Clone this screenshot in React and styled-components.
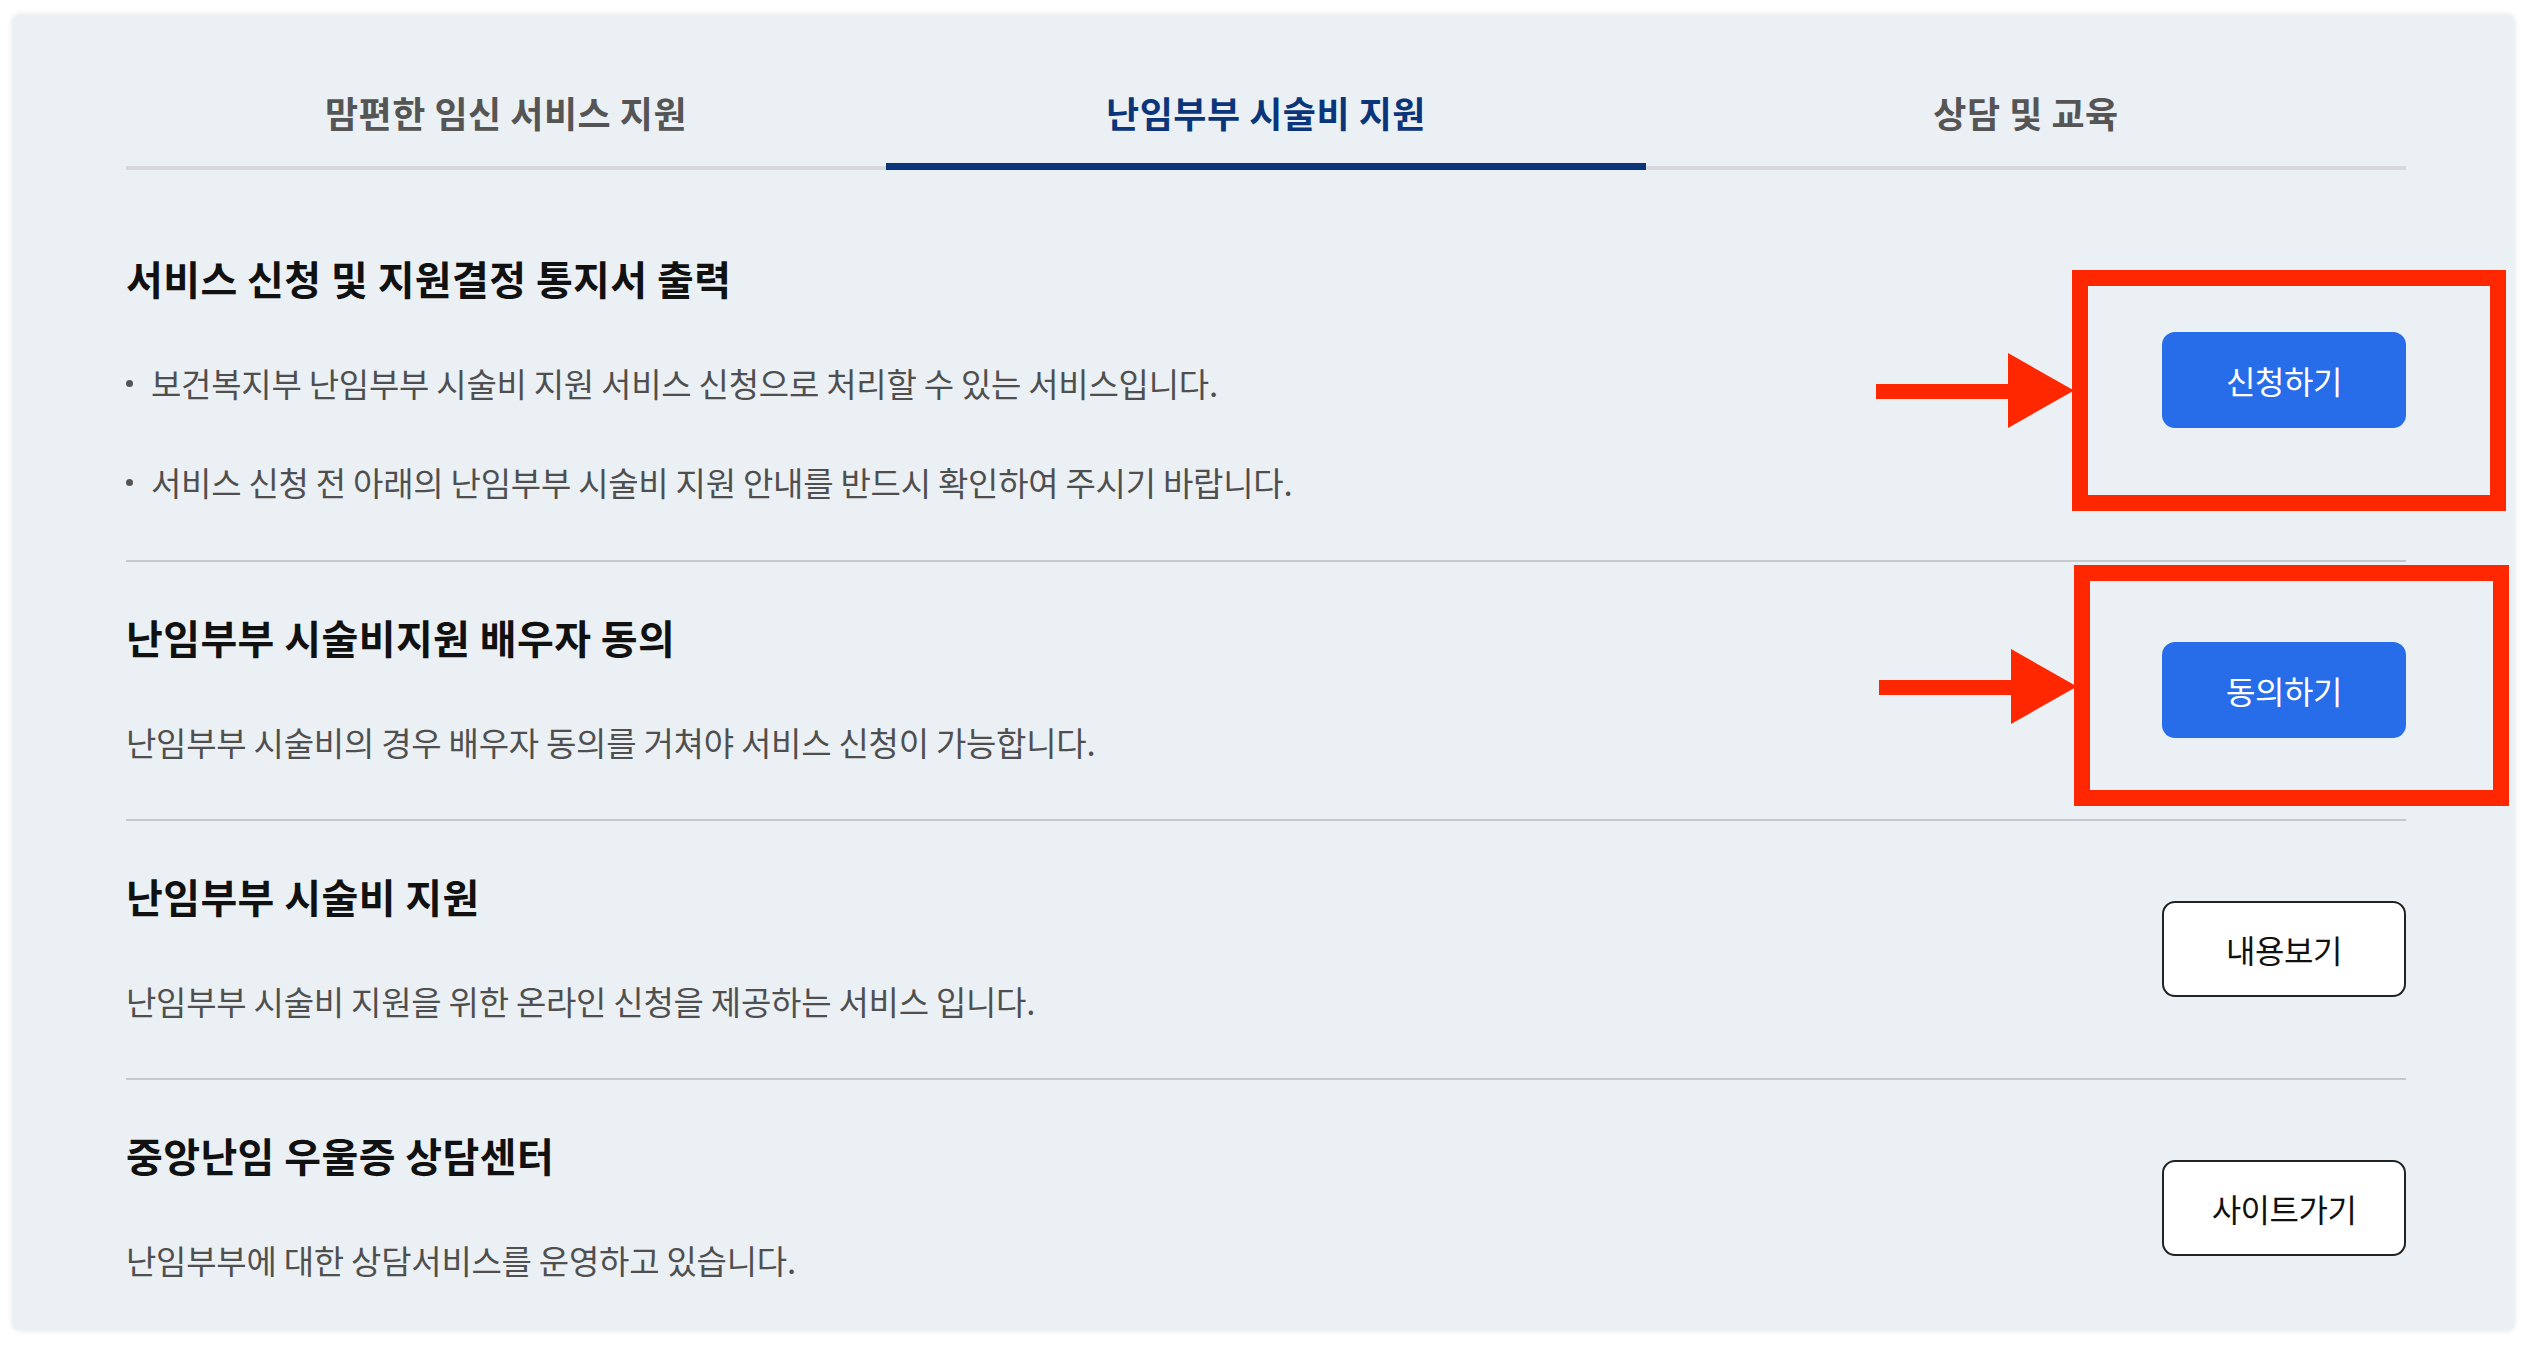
import React from "react";
import styled, { createGlobalStyle } from "styled-components";

const GlobalStyle = createGlobalStyle`
  html, body { margin: 0; padding: 0; background: #ffffff; }
  body { font-family: "Noto Sans CJK KR", "Noto Sans", sans-serif; }
  * { box-sizing: border-box; }
`;

const Page = styled.div`
  padding: 15px 14px 15px 13px;
`;

const Card = styled.div`
  background: #ebf0f4;
  border-radius: 6px;
  box-shadow: 0 0 6px rgba(0, 0, 0, 0.13);
  padding: 0 108px 0 113px;
`;

const TabBar = styled.div`
  display: grid;
  grid-template-columns: repeat(3, 1fr);
`;

const Tab = styled.div`
  height: 155px;
  padding-top: 79px;
  text-align: center;
  font-size: 36px;
  line-height: 36px;
  font-weight: 700;
  letter-spacing: 0.5px;
  color: ${(p) => (p.$active ? "#0a357a" : "#555555")};
  border-bottom: ${(p) => (p.$active ? "7px solid #0a357a" : "4px solid #d6d8db")};
`;

const Row = styled.section`
  position: relative;
  display: flex;
  align-items: center;
  justify-content: space-between;
  padding: 53px 0 55px;
  border-bottom: 2px solid #c7c8ca;
  &:first-of-type { padding-top: 86px; padding-bottom: 56px; }
  &:last-of-type { border-bottom: none; padding-bottom: 48px; }
`;

const Info = styled.div`
  display: flex;
  flex-direction: column;
  gap: 61px;
`;

const Title = styled.h3`
  margin: 0;
  font-size: 40px;
  line-height: 44px;
  font-weight: 700;
  color: #111111;
  letter-spacing: 0.4px;
`;

const Desc = styled.p`
  margin: 0;
  font-size: 33px;
  line-height: 44px;
  font-weight: 400;
  color: #4f4f4f;
  letter-spacing: -0.25px;
`;

const BulletList = styled.ul`
  margin: 0;
  padding: 0;
  list-style: none;
  display: flex;
  flex-direction: column;
  gap: 55px;
`;

const BulletItem = styled.li`
  display: flex;
  align-items: center;
  font-size: 33px;
  line-height: 44px;
  color: #4f4f4f;
  letter-spacing: -0.25px;
`;

const Dot = styled.span`
  width: 7px;
  height: 7px;
  border-radius: 50%;
  background: #555555;
  margin-right: 18px;
  flex: none;
`;

const ActionButton = styled.button`
  flex: none;
  width: 244px;
  height: 96px;
  border-radius: 13px;
  font-family: inherit;
  font-size: 32px;
  font-weight: 400;
  letter-spacing: -0.5px;
  cursor: pointer;
  background: ${(p) => (p.$primary ? "#276de9" : "#ffffff")};
  color: ${(p) => (p.$primary ? "#ffffff" : "#111111")};
  border: ${(p) => (p.$primary ? "none" : "2px solid #222222")};
`;

const Highlight = styled.div`
  position: absolute;
  border: 16px solid #ff2700;
  pointer-events: none;
`;

const ArrowMark = styled.svg`
  position: absolute;
  pointer-events: none;
`;

const Arrow = ({ style }) => (
  <ArrowMark style={style} width="198" height="75" viewBox="0 0 198 75">
    <rect x="0" y="31" width="134" height="15" fill="#ff2700" />
    <polygon points="132,0 198,37.5 132,75" fill="#ff2700" />
  </ArrowMark>
);

const tabs = ["맘편한 임신 서비스 지원", "난임부부 시술비 지원", "상담 및 교육"];

export default function App() {
  return (
    <>
      <GlobalStyle />
      <Page>
        <Card>
          <TabBar>
            {tabs.map((t, i) => (
              <Tab key={t} $active={i === 1}>
                {t}
              </Tab>
            ))}
          </TabBar>

          <Row>
            <Info>
              <Title>서비스 신청 및 지원결정 통지서 출력</Title>
              <BulletList>
                <BulletItem>
                  <Dot />
                  보건복지부 난임부부 시술비 지원 서비스 신청으로 처리할 수 있는 서비스입니다.
                </BulletItem>
                <BulletItem>
                  <Dot />
                  서비스 신청 전 아래의 난임부부 시술비 지원 안내를 반드시 확인하여 주시기 바랍니다.
                </BulletItem>
              </BulletList>
            </Info>
            <ActionButton $primary>신청하기</ActionButton>
            <Arrow style={{ left: 1750, top: 183 }} />
            <Highlight style={{ left: 1946, top: 100, width: 434, height: 241 }} />
          </Row>

          <Row>
            <Info>
              <Title>난임부부 시술비지원 배우자 동의</Title>
              <Desc>난임부부 시술비의 경우 배우자 동의를 거쳐야 서비스 신청이 가능합니다.</Desc>
            </Info>
            <ActionButton $primary>동의하기</ActionButton>
            <Arrow style={{ left: 1753, top: 87 }} />
            <Highlight style={{ left: 1948, top: 3, width: 435, height: 241 }} />
          </Row>

          <Row>
            <Info>
              <Title>난임부부 시술비 지원</Title>
              <Desc>난임부부 시술비 지원을 위한 온라인 신청을 제공하는 서비스 입니다.</Desc>
            </Info>
            <ActionButton>내용보기</ActionButton>
          </Row>

          <Row>
            <Info>
              <Title>중앙난임 우울증 상담센터</Title>
              <Desc>난임부부에 대한 상담서비스를 운영하고 있습니다.</Desc>
            </Info>
            <ActionButton>사이트가기</ActionButton>
          </Row>
        </Card>
      </Page>
    </>
  );
}
